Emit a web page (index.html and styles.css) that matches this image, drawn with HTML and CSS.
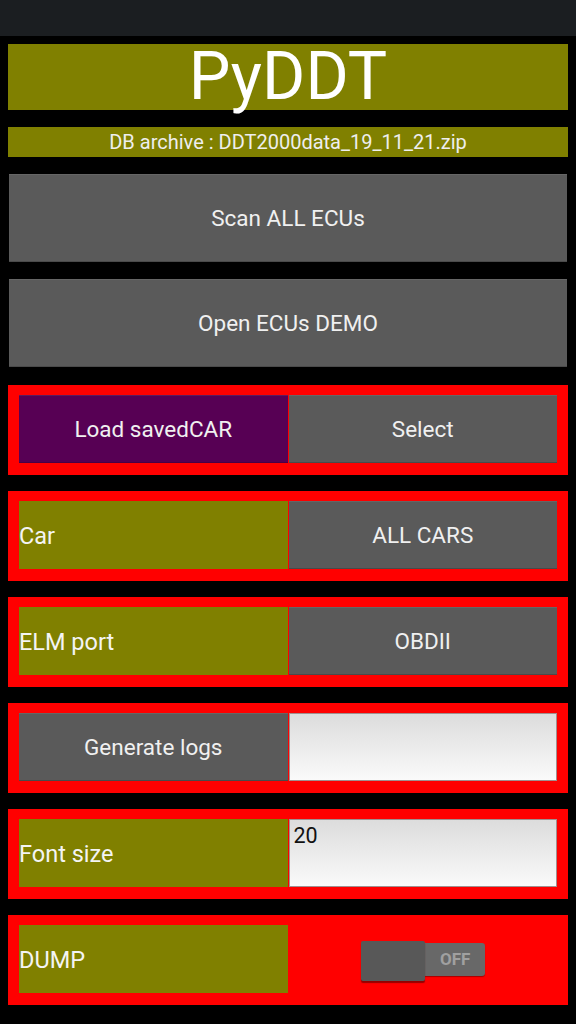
FILE: index.html
```html
<!DOCTYPE html>
<html>
<head>
<meta charset="utf-8">
<link rel="stylesheet" href="styles.css">
</head>
<body>
<div class="statusbar"></div>
<main class="stack">
  <div class="title">PyDDT</div>
  <div class="dbbar">DB archive : DDT2000data_19_11_21.zip</div>
  <div class="btn big">Scan ALL ECUs</div>
  <div class="btn big gap18">Open ECUs DEMO</div>
  <div class="redrow gap18">
    <div class="btn purple">Load savedCAR</div>
    <div class="btn">Select</div>
  </div>
  <div class="redrow">
    <div class="label">Car</div>
    <div class="btn">ALL CARS</div>
  </div>
  <div class="redrow">
    <div class="label">ELM port</div>
    <div class="btn">OBDII</div>
  </div>
  <div class="redrow">
    <div class="btn">Generate logs</div>
    <div class="field"></div>
  </div>
  <div class="redrow">
    <div class="label">Font size</div>
    <div class="field">20</div>
  </div>
  <div class="redrow">
    <div class="label">DUMP</div>
    <div class="switchcell">
      <div class="switch">
        <div class="thumb"></div>
        <div class="track">OFF</div>
      </div>
    </div>
  </div>
</main>
</body>
</html>
```

FILE: styles.css
```css
html, body {
  margin: 0;
  padding: 0;
  background: #000;
  font-family: Roboto, "Noto Sans", sans-serif;
  color: #f2f2f2;
}
.statusbar {
  height: 36px;
  background: #1b1e21;
}
.stack {
  display: flex;
  flex-direction: column;
  gap: 17px;
  padding: 8px 8px 0 8px;
}
.gap18 { margin-top: 1px; }
.title {
  height: 66px;
  line-height: 66px;
  background: #808000;
  color: #fff;
  font-size: 66px;
  text-align: center;
}
.dbbar {
  height: 30px;
  line-height: 30px;
  background: #808000;
  font-size: 20px;
  text-align: center;
  color: #eee;
}
.btn {
  display: flex;
  align-items: center;
  justify-content: center;
  background: #5a5a5a;
  font-size: 22.5px;
  color: #f0f0f0;
  box-sizing: border-box;
  border-top: 1px solid #666;
  border-bottom: 1px solid #4a4a4a;
}
.btn.big {
  height: 88px;
  margin: 0 1px;
}
.btn.purple {
  background: #570054;
  border-top-color: #5f1a5c;
  border-bottom-color: #4a0046;
}
.redrow {
  background: #ff0000;
  height: 90px;
  box-sizing: border-box;
  padding: 10px 11px 12px 11px;
  display: grid;
  grid-template-columns: 1fr 1fr;
  column-gap: 1px;
}
.redrow + .redrow { margin-top: -1px; }
.label {
  background: #808000;
  display: flex;
  align-items: center;
  padding-top: 2px;
  box-sizing: border-box;
  font-size: 23.5px;
  color: #f4f4f4;
}
.field {
  background: linear-gradient(#dcdcdc, #fafafa);
  border: 1px solid #a09090;
  box-sizing: border-box;
  color: #111;
  font-size: 21.5px;
  line-height: 24px;
  padding: 4px 4px;
}
.switchcell {
  display: flex;
  align-items: center;
  justify-content: center;
}
.switch {
  display: flex;
  align-items: center;
  margin-left: 1px;
  margin-top: 4px;
}
.thumb {
  width: 64px;
  height: 40px;
  background: #585858;
  border-radius: 2px;
  box-shadow: 0 2px 1px rgba(80,0,0,0.6);
  position: relative;
  z-index: 1;
}
.track {
  width: 60px;
  height: 33px;
  background: #686868;
  border-radius: 0 3px 3px 0;
  color: #a0a0a0;
  font-weight: bold;
  font-size: 17px;
  display: flex;
  align-items: center;
  justify-content: center;
  margin-top: -4px;
  box-shadow: 0 1px 1px rgba(80,0,0,0.5);
}
```
